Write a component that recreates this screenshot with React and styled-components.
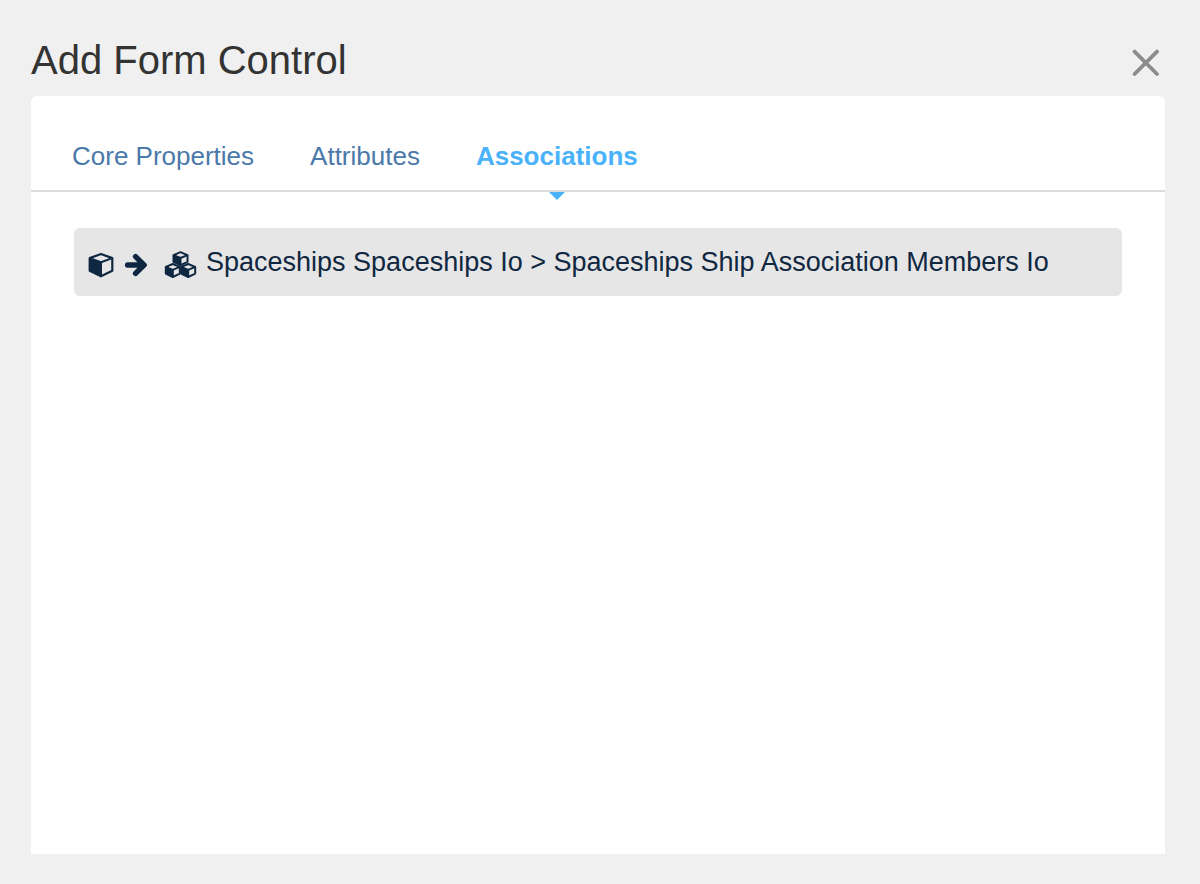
import React, {useState} from "react";
import styled, {createGlobalStyle} from "styled-components";

const TABS = ["Core Properties", "Attributes", "Associations"];

const ASSOCIATIONS = [
    {id: 1, from: "Spaceships Spaceships Io", to: "Spaceships Ship Association Members Io"}
];

const CubeIcon = () => (
    <svg width="26" height="26" viewBox="0 0 26 26" aria-hidden="true">
        <path
            d="M13 2L24.3 6.1V18.8L13 24.3L1.7 18.8V6.1Z"
            fill="none" stroke="currentColor" strokeWidth="2.2" strokeLinejoin="round"
        />
        <path d="M1.7 6.1L13 10.2V24.3L1.7 18.8Z" fill="currentColor"/>
        <path
            d="M1.7 6.1L13 10.2L24.3 6.1M13 10.2V24.3"
            fill="none" stroke="currentColor" strokeWidth="2" strokeLinejoin="round"
        />
    </svg>
);

const ArrowIcon = () => (
    <svg width="24" height="26" viewBox="0 0 24 26" aria-hidden="true">
        <path
            d="M3.6 13H17M11.6 4.6L20 13L11.6 21.4"
            fill="none" stroke="currentColor" strokeWidth="5.4" strokeLinecap="round" strokeLinejoin="round"
        />
        <path d="M19 9.6L23.2 13L19 16.4Z" fill="currentColor"/>
    </svg>
);

const SmallCube = ({x, y}) => (
    <g transform={`translate(${x} ${y})`}>
        <path
            d="M8 1L15 3.9V10.6L8 14L1 10.6V3.9Z"
            fill="none" stroke="currentColor" strokeWidth="2" strokeLinejoin="round"
        />
        <path d="M1 3.9L8 6.8V14L1 10.6Z" fill="currentColor"/>
        <path
            d="M1 3.9L8 6.8L15 3.9M8 6.8V14"
            fill="none" stroke="currentColor" strokeWidth="2" strokeLinejoin="round"
        />
    </g>
);

const CubesIcon = () => (
    <svg width="33" height="28" viewBox="0 0 33 28" aria-hidden="true">
        <SmallCube x={8.5} y={0.2}/>
        <SmallCube x={0.8} y={12}/>
        <SmallCube x={16.2} y={12}/>
    </svg>
);

function App() {
    const [activeTab, setActiveTab] = useState("Associations");

    return (
        <>
            <GlobalStyle/>
            <Dialog>
                <Header>
                    <Title>Add Form Control</Title>
                    <CloseButton type="button" aria-label="Close">
                        <svg width="28" height="28" viewBox="0 0 28 28">
                            <path
                                d="M2.6 3.6L25 26M25 3.6L2.6 26"
                                stroke="currentColor" strokeWidth="3.8" strokeLinecap="round"
                            />
                        </svg>
                    </CloseButton>
                </Header>
                <Panel>
                    <TabBar role="tablist">
                        {TABS.map((tab) => (
                            <Tab
                                key={tab}
                                type="button"
                                role="tab"
                                aria-selected={tab === activeTab}
                                $active={tab === activeTab}
                                onClick={() => setActiveTab(tab)}
                            >
                                {tab}
                            </Tab>
                        ))}
                    </TabBar>
                    {activeTab === "Associations" && (
                        <List>
                            {ASSOCIATIONS.map((item) => (
                                <li key={item.id}>
                                    <AssociationButton type="button">
                                        <Icons>
                                            <Direction>
                                                <CubeIcon/>
                                                <ArrowIcon/>
                                            </Direction>
                                            <CubesIcon/>
                                        </Icons>
                                        <span>{item.from} &gt; {item.to}</span>
                                    </AssociationButton>
                                </li>
                            ))}
                        </List>
                    )}
                </Panel>
            </Dialog>
        </>
    );
}

export default App;

const GlobalStyle = createGlobalStyle`
  * {
    box-sizing: border-box;
  }

  body {
    margin: 0;
    background: #f0f0f0;
    font-family: "Liberation Sans", Arial, sans-serif;
  }

  button {
    margin: 0;
    border: 0;
    background: none;
    font: inherit;
    cursor: pointer;
  }
`;

const Dialog = styled.main`
  display: flex;
  flex-direction: column;
  min-height: 100vh;
  padding: 36px 35px 30px 31px;
`;

const Header = styled.header`
  display: flex;
  align-items: flex-start;
  justify-content: space-between;
  padding: 0 5px 12px 0;
`;

const Title = styled.h1`
  margin: 0;
  color: #333;
  font-size: 40px;
  line-height: 48px;
  font-weight: 400;
`;

const CloseButton = styled.button`
  display: flex;
  padding: 12px 0 0;
  color: #8c8c8c;
`;

const Panel = styled.section`
  flex: 1;
  background: #fff;
  border-radius: 6px 6px 0 0;
`;

const TabBar = styled.div`
  display: flex;
  gap: 56px;
  height: 96px;
  padding: 26px 41px 0;
  border-bottom: 2px solid #ddd;
`;

const Tab = styled.button`
  position: relative;
  padding: 0;
  color: ${({$active}) => ($active ? "#4ab2fb" : "#4a79aa")};
  font-size: 26px;
  line-height: 32px;
  font-weight: ${({$active}) => ($active ? 700 : 400)};

  &::after {
    content: "";
    display: ${({$active}) => ($active ? "block" : "none")};
    position: absolute;
    top: calc(100% + 2px);
    left: 50%;
    transform: translateX(-50%);
    border: 8px solid transparent;
    border-top-color: #4ab2fb;
    border-bottom: 0;
  }
`;

const List = styled.ul`
  margin: 0;
  padding: 36px 43px;
  list-style: none;
`;

const AssociationButton = styled.button`
  display: flex;
  align-items: center;
  gap: 9px;
  width: 100%;
  min-height: 68px;
  padding: 0 14px;
  border-radius: 6px;
  background: #e6e6e6;
  color: #0f2741;
  font-size: 27px;
  line-height: 32px;
  text-align: left;
`;

const Icons = styled.span`
  display: flex;
  align-items: center;
  gap: 16px;
  padding-top: 6px;
`;

const Direction = styled.span`
  display: flex;
  gap: 10px;
`;
